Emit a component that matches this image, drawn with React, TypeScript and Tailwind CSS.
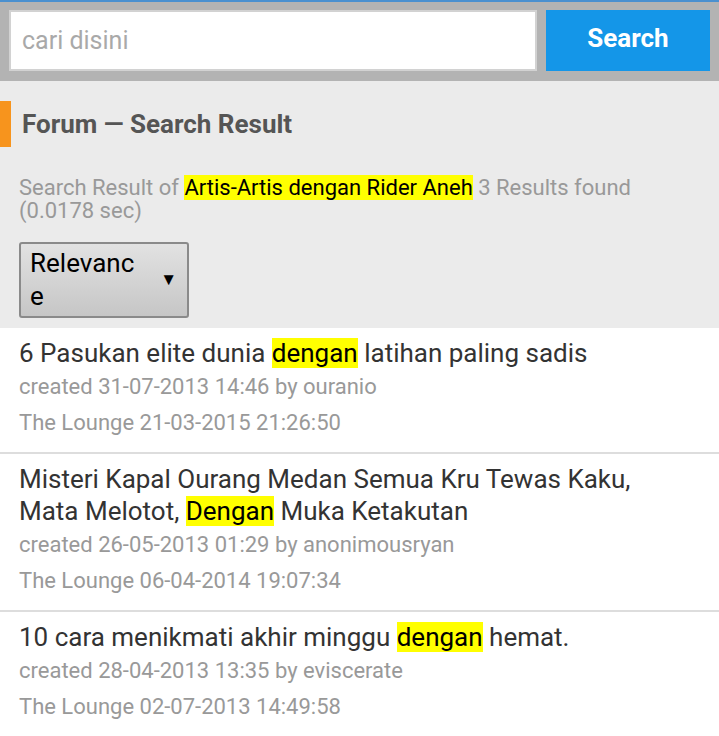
import React from "react";

const HL = ({ children }: { children: React.ReactNode }) => (
  <span className="bg-[#ffff00] text-black">{children}</span>
);

type Item = { title: React.ReactNode; created: string; lounge: string };

const items: Item[] = [
  {
    title: (
      <>
        6 Pasukan elite dunia <HL>dengan</HL> latihan paling sadis
      </>
    ),
    created: "created 31-07-2013 14:46 by ouranio",
    lounge: "The Lounge 21-03-2015 21:26:50",
  },
  {
    title: (
      <>
        Misteri Kapal Ourang Medan Semua Kru Tewas Kaku, Mata Melotot, <HL>Dengan</HL> Muka Ketakutan
      </>
    ),
    created: "created 26-05-2013 01:29 by anonimousryan",
    lounge: "The Lounge 06-04-2014 19:07:34",
  },
  {
    title: (
      <>
        10 cara menikmati akhir minggu <HL>dengan</HL> hemat.
      </>
    ),
    created: "created 28-04-2013 13:35 by eviscerate",
    lounge: "The Lounge 02-07-2013 14:49:58",
  },
];

export default function App() {
  return (
    <div
      className="w-[719px] min-h-[736px] bg-white"
      style={{ fontFamily: "Roboto, 'Noto Sans', sans-serif" }}
    >
      {/* search bar */}
      <div className="border-t-2 border-[#4a90cf] bg-[#b3b3b3] px-[9px] pt-[8px] pb-[10px] flex gap-[9px]">
        <div className="flex-1 h-[61px] bg-white border-2 border-[#d2d2d2] flex items-center px-[11px]">
          <span className="text-[25px] text-[#a9a9a9]">cari disini</span>
        </div>
        <div className="w-[164px] h-[61px] bg-[#1496e8] flex items-center justify-center pb-[4px]">
          <span className="text-[26px] font-bold text-white">Search</span>
        </div>
      </div>

      {/* header */}
      <div className="bg-[#ebebeb] pt-[20px] pb-[10px]">
        <div className="flex items-center h-[46px]">
          <div className="w-[11px] h-[46px] bg-[#f7941d]" />
          <span className="ml-[11px] text-[26px] font-bold text-[#555555]">
            Forum — Search Result
          </span>
        </div>
        <div className="px-[19px] mt-[29px] text-[22px] leading-[23px] text-[#999999]">
          Search Result of <HL>Artis-Artis dengan Rider Aneh</HL> 3 Results found (0.0178 sec)
        </div>
        <div className="px-[19px] mt-[20px]">
          <div className="w-[170px] h-[76px] border-2 border-[#8a8a8a] rounded-[3px] bg-gradient-to-b from-[#e2e2e2] to-[#c6c6c6] flex items-center pl-[9px] pr-[10px]">
            <span className="w-[112px] text-[26px] leading-[33px] text-black break-all">
              Relevance
            </span>
            <span className="ml-auto text-[17px] text-black">▼</span>
          </div>
        </div>
      </div>

      {/* results */}
      <div>
        {items.map((it, i) => (
          <div key={i} className="px-[19px] pt-[9px] pb-[11px] border-b-2 border-[#dddddd]">
            <div className="max-w-[650px] text-[26px] leading-[32px] text-[#333333]">{it.title}</div>
            <div className="text-[22px] leading-[36px] text-[#999999]">{it.created}</div>
            <div className="text-[22px] leading-[36px] text-[#999999]">{it.lounge}</div>
          </div>
        ))}
      </div>
    </div>
  );
}
